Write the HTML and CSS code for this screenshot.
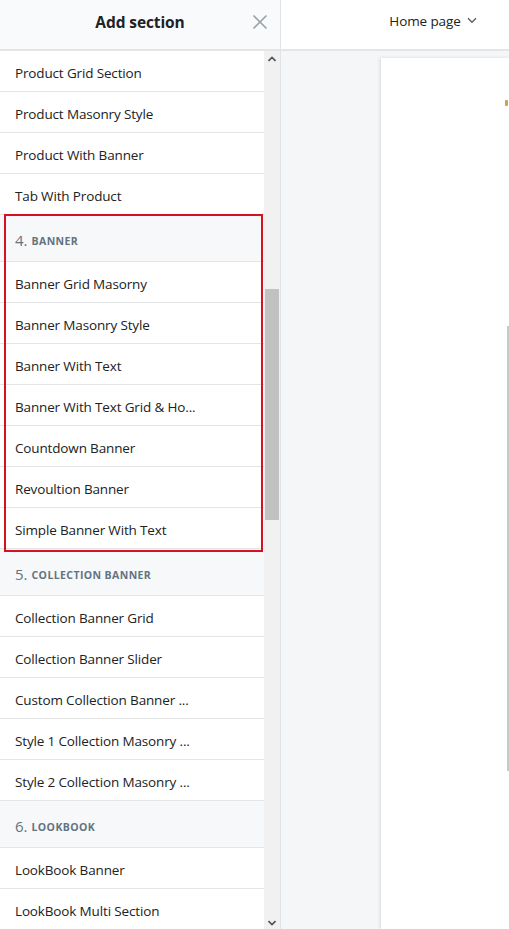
FILE: index.html
```html
<!DOCTYPE html>
<html>
<head>
<meta charset="utf-8">
<link rel="stylesheet" href="styles.css">
</head>
<body>
<div class="app">
  <aside class="sidebar">
    <header class="side-head">
      <span class="side-title">Add section</span>
      <button class="close" aria-label="Close">
        <svg width="16" height="16" viewBox="0 0 16 16"><path d="M1.5 1.5 L14.5 14.5 M14.5 1.5 L1.5 14.5" stroke="#9ba1a6" stroke-width="1.6" fill="none"/></svg>
      </button>
    </header>
    <div class="side-body">
      <div class="list">
        <div class="item">Product Grid Section</div>
        <div class="item">Product Masonry Style</div>
        <div class="item">Product With Banner</div>
        <div class="item">Tab With Product</div>
        <div class="highlight">
          <div class="group"><span class="num">4.</span><span class="gname">BANNER</span></div>
          <div class="item">Banner Grid Masorny</div>
          <div class="item">Banner Masonry Style</div>
          <div class="item">Banner With Text</div>
          <div class="item">Banner With Text Grid &amp; Ho...</div>
          <div class="item">Countdown Banner</div>
          <div class="item">Revoultion Banner</div>
          <div class="item last">Simple Banner With Text</div>
        </div>
        <div class="group"><span class="num">5.</span><span class="gname">COLLECTION BANNER</span></div>
        <div class="item">Collection Banner Grid</div>
        <div class="item">Collection Banner Slider</div>
        <div class="item">Custom Collection Banner ...</div>
        <div class="item">Style 1 Collection Masonry ...</div>
        <div class="item">Style 2 Collection Masonry ...</div>
        <div class="group"><span class="num">6.</span><span class="gname">LOOKBOOK</span></div>
        <div class="item">LookBook Banner</div>
        <div class="item">LookBook Multi Section</div>
      </div>
      <div class="scrollbar">
        <svg class="arrow up" width="8" height="6" viewBox="0 0 8 6"><path d="M0.5 5 L4 1.5 L7.5 5" stroke="#505050" stroke-width="1.6" fill="none"/></svg>
        <div class="track"><div class="thumb"></div></div>
        <svg class="arrow down" width="8" height="6" viewBox="0 0 8 6"><path d="M0.5 1 L4 4.5 L7.5 1" stroke="#505050" stroke-width="1.6" fill="none"/></svg>
      </div>
    </div>
  </aside>
  <main class="main">
    <header class="top">
      <span class="page-select">Home page
        <svg width="10" height="7" viewBox="0 0 10 7"><path d="M1 1.2 L5 5.2 L9 1.2" stroke="#5c5f62" stroke-width="1.4" fill="none"/></svg>
      </span>
    </header>
    <div class="canvas">
      <div class="frame">
        <div class="frame-mark"></div>
        <div class="frame-line"></div>
      </div>
    </div>
  </main>
</div>
</body>
</html>
```
FILE: styles.css
```css
* { box-sizing: border-box; }
html, body { margin: 0; padding: 0; }
body {
  font-family: "Open Sans", "Noto Sans", sans-serif;
  color: #212b36;
  width: 509px;
  height: 929px;
  overflow: hidden;
}
.app { display: flex; height: 929px; }
.sidebar {
  width: 281px;
  flex: none;
  border-right: 1px solid #e1e3e5;
  display: flex;
  flex-direction: column;
  background: #fff;
}
.side-head {
  height: 51px;
  flex: none;
  background: #f9fafb;
  border-bottom: 2px solid #e4e5e7;
  display: flex;
  align-items: center;
  justify-content: center;
  position: relative;
}
.side-title {
  font-weight: 700;
  font-size: 15.5px;
  color: #202223;
  letter-spacing: -0.1px;
  margin-top: -6px;
}
.close {
  position: absolute;
  right: 12px;
  top: 14px;
  border: 0;
  background: none;
  padding: 0;
  width: 16px;
  height: 16px;
  display: flex;
}
.side-body { flex: 1; display: flex; min-height: 0; }
.list { width: 264px; flex: none; overflow: hidden; }
.item {
  height: 41px;
  border-bottom: 1px solid #e4e5e7;
  display: flex;
  align-items: center;
  padding-left: 15px;
  padding-top: 4px;
  font-size: 13.5px;
  color: #202223;
  white-space: nowrap;
  letter-spacing: -0.15px;
}
.group {
  height: 47px;
  background: #f7f8fa;
  border-bottom: 1px solid #e4e5e7;
  display: flex;
  align-items: center;
  padding-left: 15px;
  padding-top: 3px;
  color: #637381;
}
.num { font-size: 15px; font-weight: 500; margin-right: 4px; }
.gname { font-size: 10.5px; font-weight: 700; letter-spacing: 0.4px; padding-top: 2px; }
.highlight { position: relative; }
.highlight::after {
  content: "";
  position: absolute;
  left: 4px;
  right: 1px;
  top: -1px;
  bottom: -3px;
  border: 2.5px solid #d9101f;
  pointer-events: none;
}
.scrollbar {
  width: 16px;
  flex: none;
  background: #f1f1f1;
  display: flex;
  flex-direction: column;
  align-items: center;
}
.arrow { flex: none; }
.arrow.up { margin: 5px 0 5px; }
.arrow.down { margin: 4px 0 3px; }
.track { flex: 1; width: 100%; padding-top: 222px; padding-bottom: 396px; display: flex; }
.thumb { flex: 1; background: #c1c1c1; margin: 0 1px; }
.main { flex: 1; display: flex; flex-direction: column; min-width: 0; }
.top {
  height: 51px;
  flex: none;
  background: #fff;
  border-bottom: 2px solid #e4e5e7;
  display: flex;
  justify-content: center;
  align-items: center;
}
.page-select {
  font-size: 13.5px;
  color: #202223;
  display: flex;
  align-items: center;
  gap: 6px;
  margin-top: -8px;
  margin-left: 76px;
  letter-spacing: -0.1px;
}
.canvas {
  flex: 1;
  background: #f4f6f8;
  padding: 7px 0 0 100px;
  display: flex;
}
.frame {
  flex: 1;
  background: #fff;
  box-shadow: -1px 0 3px rgba(0,0,0,0.12);
  position: relative;
}
.frame-mark {
  position: absolute;
  right: 1px;
  top: 42px;
  width: 3px;
  height: 6px;
  background: #c8a060;
  border-radius: 1px;
}
.frame-line {
  position: absolute;
  right: 0;
  top: 268px;
  width: 2px;
  height: 445px;
  background: #c9c9c9;
}
```
